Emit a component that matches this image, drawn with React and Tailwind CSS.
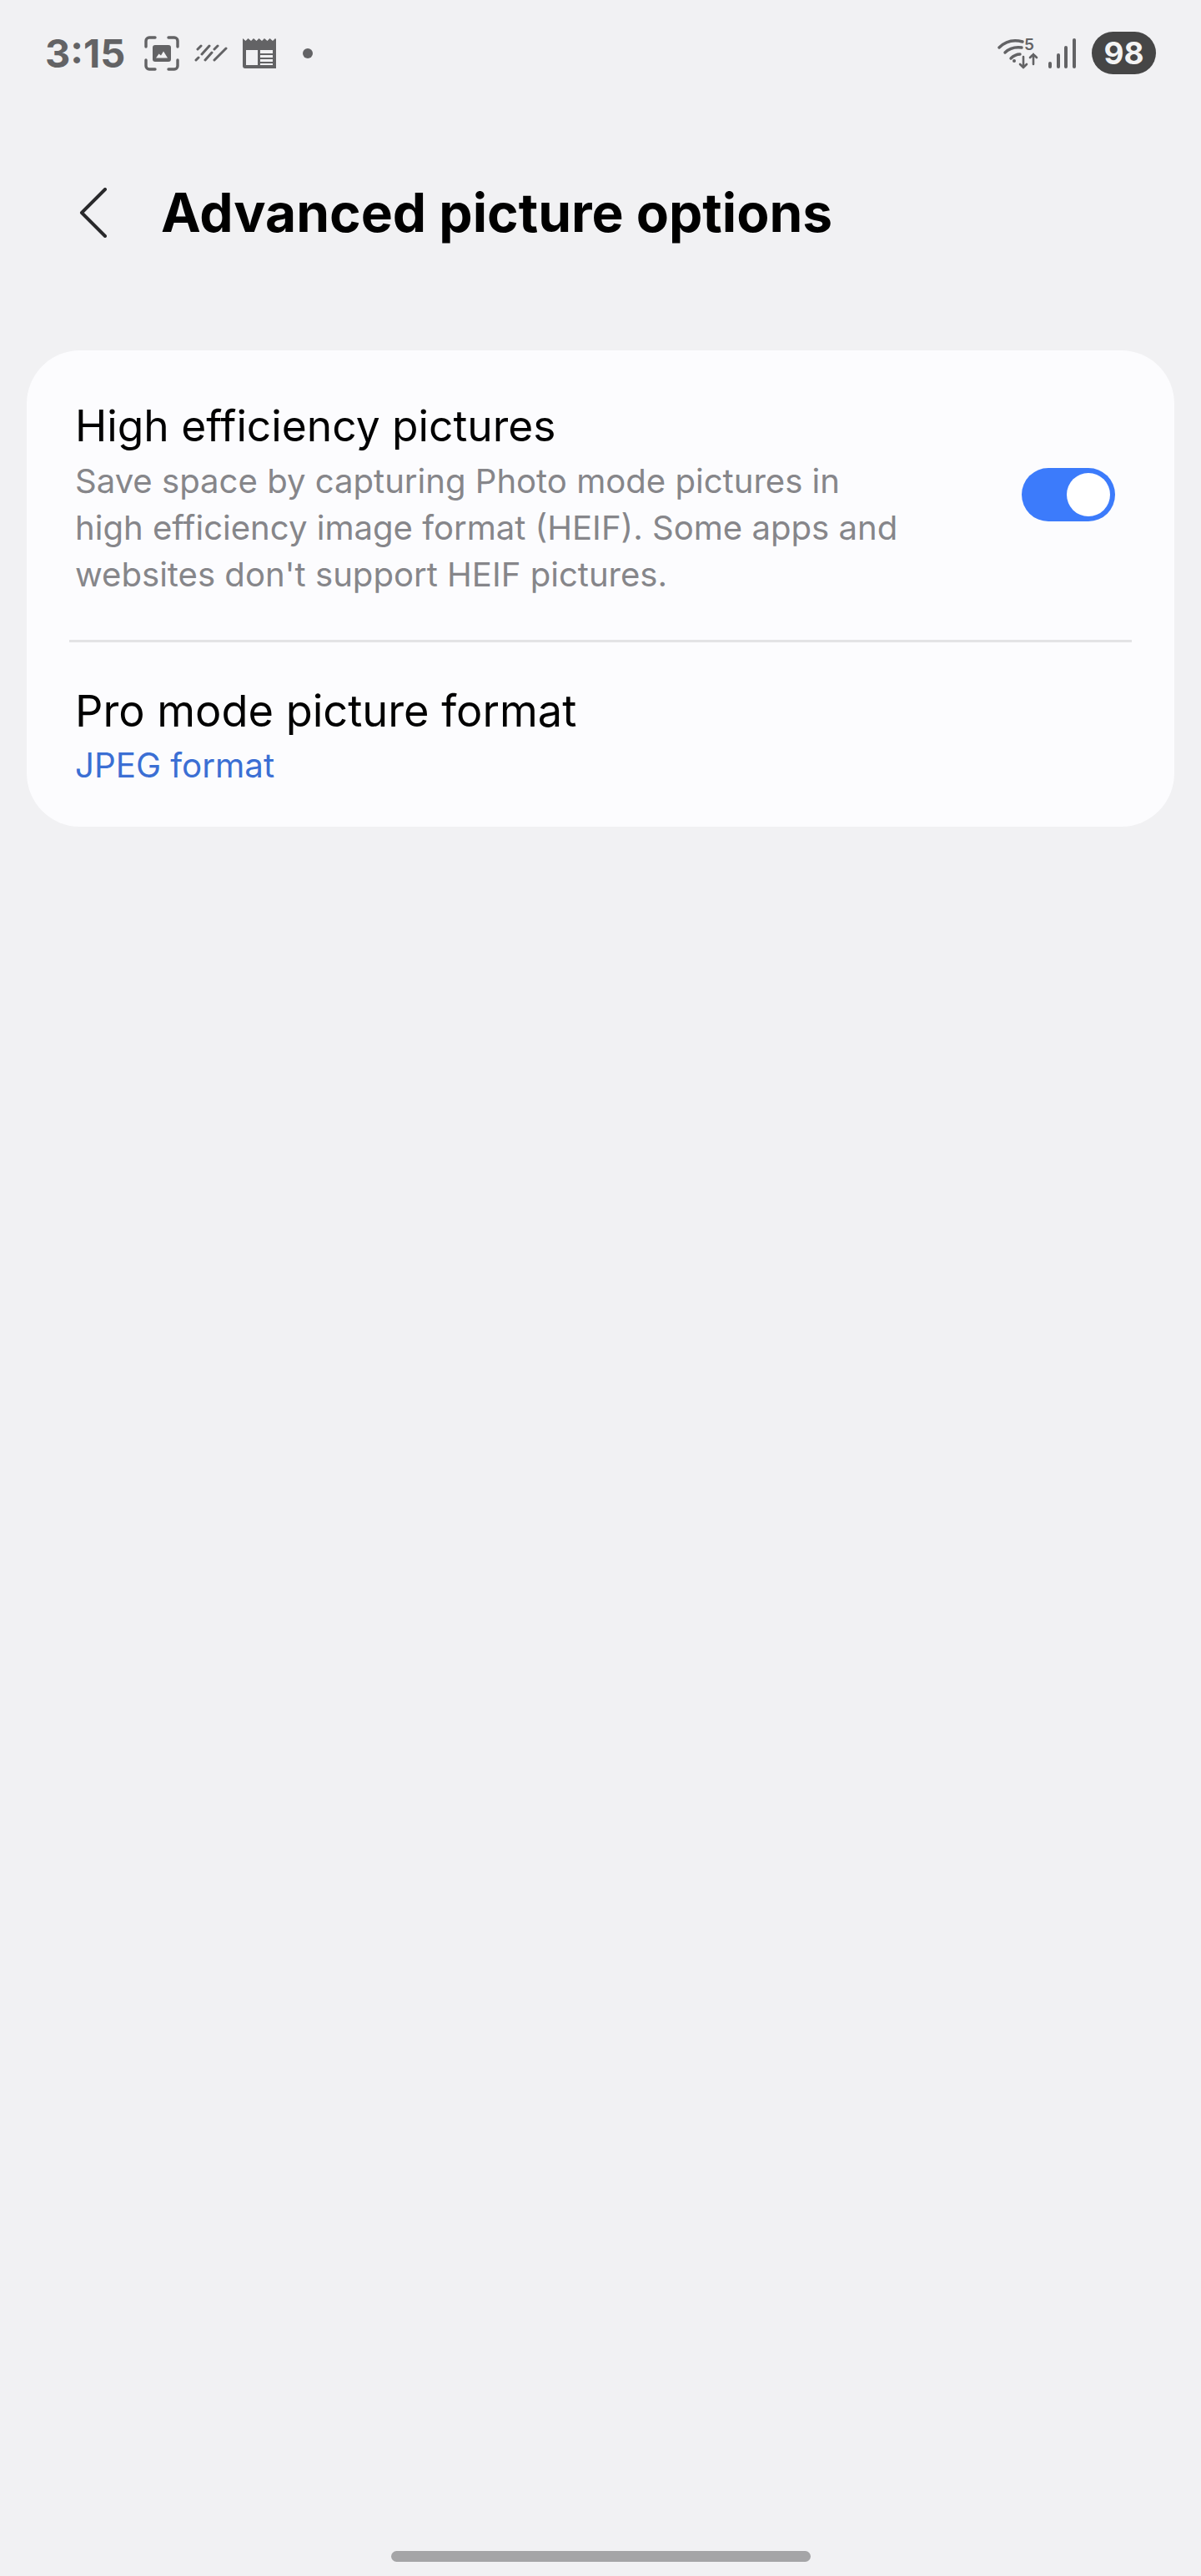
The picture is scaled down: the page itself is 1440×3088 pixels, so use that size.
const StatusIconsLeft = () => (
    <div className="flex items-center">
        <svg width="42" height="42" viewBox="0 0 42 42" className="ml-[23px]" fill="none">
            <path d="M2 13V6a4 4 0 0 1 4-4h7M29 2h7a4 4 0 0 1 4 4v7M40 29v7a4 4 0 0 1-4 4h-7M13 40H6a4 4 0 0 1-4-4v-7" stroke="#636365" strokeWidth="3.4" strokeLinecap="round" />
            <rect x="10" y="11" width="22" height="20" rx="3" fill="#636365" />
            <path d="M14 26.5l3.5-5 2.5 2 3-5 5 8z" fill="#f1f1f3" />
        </svg>
        <svg width="40" height="22" viewBox="0 0 40 22" className="ml-[18px]" fill="none" stroke="#636365" strokeWidth="3" strokeLinecap="round">
            <path d="M4 6l4-4M2 19l3-3M9 12l9-10M13 19l8-9M24 6l4-4M24 19l14-14" />
        </svg>
        <svg width="40" height="36" viewBox="0 0 40 36" className="ml-[18px]">
            <path d="M0 0l3.5 3 3-3 3.5 3 3-3 3.5 3 3-3 3.5 3 3-3 3.5 3 3-3 3.5 3 3-3 3 3V33a3 3 0 0 1-3 3H3a3 3 0 0 1-3-3z" fill="#636365" />
            <rect x="4" y="10" width="32" height="22" fill="#f1f1f3" />
            <rect x="4" y="10" width="32" height="4" fill="#636365" />
            <path d="M18 14h3v18h-3zM21 18h15v2H21zM21 23h15v2H21zM21 28h15v2H21z" fill="#636365" />
        </svg>
        <div className="ml-[32px] h-3 w-3 rounded-full bg-[#636365]"></div>
    </div>
);

const StatusIconsRight = () => (
    <div className="flex items-center">
        <div className="relative h-[38px] w-[50px]">
            <svg width="50" height="38" viewBox="0 0 50 38" fill="none" stroke="#636365" strokeWidth="3.4" strokeLinecap="round">
                <path d="M2 12C9 5 19 2 30 5" />
                <path d="M9 18c5-5 12-7 20-6" />
                <path d="M16 25c3-3 7-5 11-5" />
                <circle cx="20" cy="28" r="2" fill="#636365" stroke="none" />
                <path d="M31 23v13M27 32l4 4 4-4M43 32V20M39 24l4-4 4 4" strokeWidth="2.6" />
            </svg>
            <span className="absolute left-[32px] -top-[1px] text-[19px] font-semibold leading-[19px] text-[#636365]">5</span>
        </div>
        <svg width="33" height="36" viewBox="0 0 33 36" className="ml-[11px]" fill="#636365">
            <rect x="0" y="28" width="4" height="8" rx="2" />
            <rect x="10" y="18" width="4" height="18" rx="2" />
            <rect x="19" y="9" width="4" height="27" rx="2" />
            <rect x="29" y="0" width="4" height="36" rx="2" />
        </svg>
        <div className="ml-[19px] flex h-[51px] w-[77px] items-center justify-center rounded-full bg-[#464646] text-[37px] font-bold text-[#f4f4f4]">98</div>
    </div>
);

const App = () => {
    return (
        <div className="flex h-[3088px] w-[1440px] flex-col bg-[#f1f1f3] font-['Inter',sans-serif]">
            <div className="flex h-[205px] items-start justify-between pl-[54px] pr-[54px] pt-[38px]">
                <div className="flex h-[51px] items-center">
                    <span className="text-[47px] font-bold leading-none text-[#636365]">3:15</span>
                    <StatusIconsLeft />
                </div>
                <StatusIconsRight />
            </div>

            <div className="flex h-[99px] items-center pl-[93px]">
                <svg width="36" height="60" viewBox="0 0 36 60" fill="none" stroke="#29292b" strokeWidth="4" strokeLinecap="round" strokeLinejoin="round">
                    <path d="M33 2L5 30l28 28" />
                </svg>
                <h1 className="ml-[64px] text-[64px] font-bold leading-none text-black">Advanced picture options</h1>
            </div>

            <div className="mx-8 mt-[116px] h-[571px] rounded-[64px] bg-[#fcfcfe] px-[51px]">
                <div className="flex h-[350px] items-start justify-between border-b-[3px] border-[#e3e3e5] pl-[7px] pr-[20px]">
                    <div className="w-[1040px] pt-[52px]">
                        <div className="text-[51.5px] leading-[77px] text-black">High efficiency pictures</div>
                        <div className="text-[40.1px] leading-[56px] text-[#86868a]">
                            Save space by capturing Photo mode pictures in<br />
                            high efficiency image format (HEIF). Some apps and<br />
                            websites don't support HEIF pictures.
                        </div>
                    </div>
                    <div className="mt-[141px] flex h-16 w-[112px] items-center justify-end rounded-full bg-[#3c7bfb] pr-[6px]">
                        <div className="h-[52px] w-[52px] rounded-full bg-white"></div>
                    </div>
                </div>
                <div className="pl-[7px] pt-[44px]">
                    <div className="text-[52.3px] leading-[76px] text-black">Pro mode picture format</div>
                    <div className="text-[40.3px] leading-[56px] text-[#3b6fd4]">JPEG format</div>
                </div>
            </div>

            <div className="mt-auto mb-[17px] h-[13px] w-[503px] self-center rounded-full bg-[#a5a5a7]"></div>
        </div>
    );
};

export default App;
